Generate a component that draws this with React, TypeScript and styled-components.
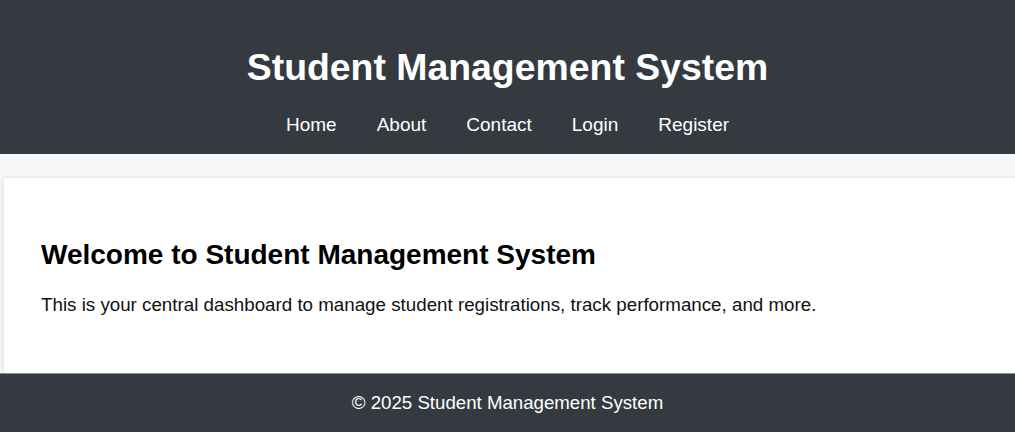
import React from 'react';
import styled, { createGlobalStyle } from 'styled-components';

const GlobalStyle = createGlobalStyle`
  body {
    margin: 0;
    background: #f5f6f8;
    font-family: "Liberation Sans", Arial, sans-serif;
  }
`;

const Header = styled.header`
  background: #343a40;
  color: #fff;
  height: 154px;
  padding-top: 45px;
  box-sizing: border-box;
  text-align: center;
`;

const Title = styled.h1`
  margin: 0;
  font-size: 37.4px;
  line-height: 44px;
  font-weight: bold;
`;

const Nav = styled.nav`
  display: flex;
  justify-content: center;
  gap: 40px;
  margin-top: 24px;
`;

const NavLink = styled.a`
  color: #fff;
  text-decoration: none;
  font-size: 19px;
  line-height: 24px;
`;

const Main = styled.main`
  padding: 24px 0 0 4px;
`;

const Card = styled.section`
  background: #fff;
  height: 195px;
  box-sizing: border-box;
  padding: 61px 37px 0;
  box-shadow: 0 0 4px rgba(0, 0, 0, 0.12);
`;

const Heading = styled.h2`
  margin: 0;
  font-size: 28px;
  line-height: 32px;
  color: #000;
`;

const Text = styled.p`
  margin: 22px 0 0;
  font-size: 18.75px;
  line-height: 24px;
  color: #111;
`;

const Footer = styled.footer`
  background: #343a40;
  color: #fff;
  height: 59px;
  display: flex;
  align-items: center;
  justify-content: center;
  font-size: 18.66px;
  border-top: 1px solid #8a8d91;
  box-sizing: border-box;
`;

const links = ['Home', 'About', 'Contact', 'Login', 'Register'];

export default function App() {
  return (
    <>
      <GlobalStyle />
      <Header>
        <Title>Student Management System</Title>
        <Nav>
          {links.map((l) => (
            <NavLink key={l} href="#">{l}</NavLink>
          ))}
        </Nav>
      </Header>
      <Main>
        <Card>
          <Heading>Welcome to Student Management System</Heading>
          <Text>
            This is your central dashboard to manage student registrations, track performance, and more.
          </Text>
        </Card>
      </Main>
      <Footer>© 2025 Student Management System</Footer>
    </>
  );
}
